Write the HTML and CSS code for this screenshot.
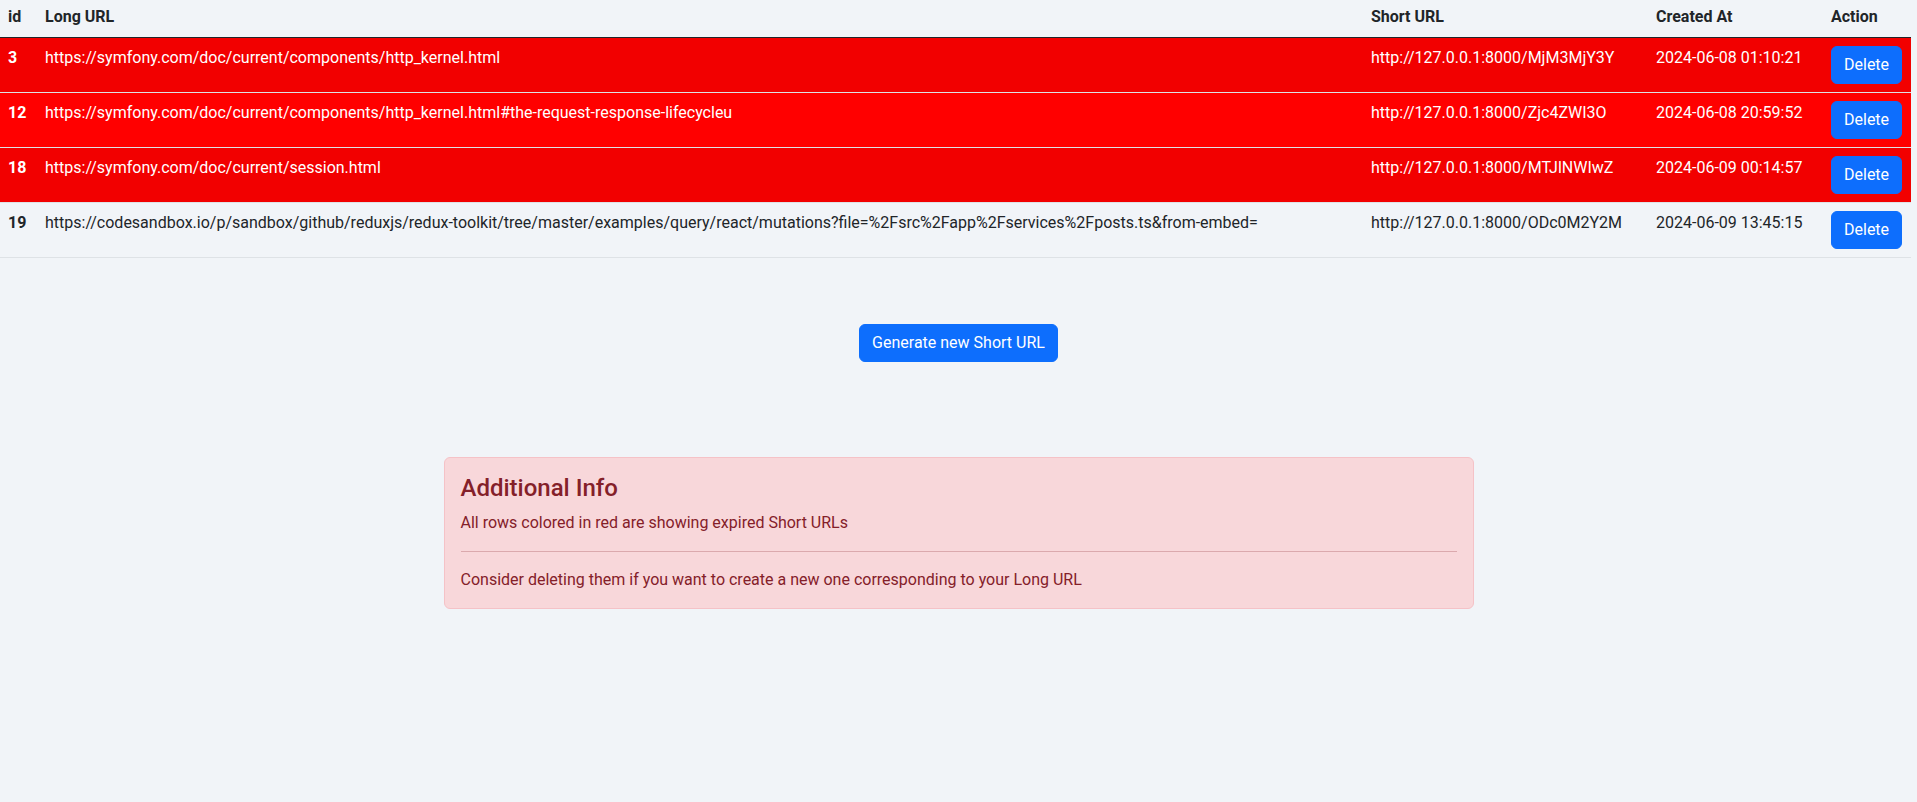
FILE: index.html
```html
<!DOCTYPE html>
<html lang="en">
<head>
<meta charset="utf-8">
<title>Short URLs</title>
<link rel="stylesheet" href="styles.css">
</head>
<body>
<main class="page">
  <table class="url-table">
    <colgroup>
      <col class="c-id">
      <col class="c-long">
      <col class="c-short">
      <col class="c-date">
      <col class="c-action">
    </colgroup>
    <thead>
      <tr>
        <th>id</th>
        <th>Long URL</th>
        <th>Short URL</th>
        <th>Created At</th>
        <th>Action</th>
      </tr>
    </thead>
    <tbody>
      <tr class="expired odd">
        <th>3</th>
        <td>https://symfony.com/doc/current/components/http_kernel.html</td>
        <td>http://127.0.0.1:8000/MjM3MjY3Y</td>
        <td>2024-06-08 01:10:21</td>
        <td><button class="btn">Delete</button></td>
      </tr>
      <tr class="expired">
        <th>12</th>
        <td>https://symfony.com/doc/current/components/http_kernel.html#the-request-response-lifecycleu</td>
        <td>http://127.0.0.1:8000/Zjc4ZWI3O</td>
        <td>2024-06-08 20:59:52</td>
        <td><button class="btn">Delete</button></td>
      </tr>
      <tr class="expired odd">
        <th>18</th>
        <td>https://symfony.com/doc/current/session.html</td>
        <td>http://127.0.0.1:8000/MTJlNWIwZ</td>
        <td>2024-06-09 00:14:57</td>
        <td><button class="btn">Delete</button></td>
      </tr>
      <tr>
        <th>19</th>
        <td>https://codesandbox.io/p/sandbox/github/reduxjs/redux-toolkit/tree/master/examples/query/react/mutations?file=%2Fsrc%2Fapp%2Fservices%2Fposts.ts&amp;from-embed=</td>
        <td>http://127.0.0.1:8000/ODc0M2Y2M</td>
        <td>2024-06-09 13:45:15</td>
        <td><button class="btn">Delete</button></td>
      </tr>
    </tbody>
  </table>

  <div class="actions">
    <button class="btn">Generate new Short URL</button>
  </div>

  <div class="alert">
    <h4 class="alert-heading">Additional Info</h4>
    <p>All rows colored in red are showing expired Short URLs</p>
    <hr>
    <p class="last">Consider deleting them if you want to create a new one corresponding to your Long URL</p>
  </div>
</main>
</body>
</html>
```
FILE: styles.css
```css
* { box-sizing: border-box; }

html, body {
  margin: 0;
  background: #f1f4f8;
}

body {
  font-family: Roboto, "Noto Sans", sans-serif;
  font-size: 16px;
  line-height: 24px;
  color: #212529;
}

.page {
  display: flex;
  flex-direction: column;
}

.url-table {
  width: 1911px;
  table-layout: fixed;
  border-collapse: collapse;
}

.c-id { width: 37px; }
.c-long { width: 1326px; }
.c-short { width: 285px; }
.c-date { width: 175px; }
.c-action { width: 88px; }

.url-table th,
.url-table td {
  padding: 8px;
  text-align: left;
  vertical-align: top;
  white-space: nowrap;
  overflow: hidden;
}

.url-table thead th {
  padding-top: 5px;
  font-weight: 700;
  border-bottom: 1px solid #212529;
}

.url-table tbody th { font-weight: 700; }

.url-table tbody tr { border-bottom: 1px solid #dee2e6; }

.url-table tbody tr.expired {
  background: #ff0000;
  color: #fff;
}

.url-table tbody tr.expired.odd { background: #f20000; }

.btn {
  font-family: inherit;
  font-size: 16px;
  line-height: 24px;
  padding: 6px 12px;
  border: 1px solid #0d6efd;
  border-radius: 6px;
  background: #0d6efd;
  color: #fff;
  cursor: pointer;
}

.actions {
  display: flex;
  justify-content: center;
  padding-top: 66px;
  padding-bottom: 95px;
}

.alert {
  width: 1030px;
  align-self: center;
  padding: 16px;
  background: #f8d7da;
  border: 1px solid #f5c2c7;
  border-radius: 6px;
  color: #842029;
}

.alert-heading {
  margin: 0 0 8px;
  font-size: 24px;
  line-height: 28.8px;
  font-weight: 500;
  color: #842029;
}

.alert p { margin: 0 0 16px; }
.alert p.last { margin-bottom: 0; }

.alert hr {
  margin: 16px 0;
  border: 0;
  border-top: 1px solid #842029;
  opacity: 0.25;
}
```
